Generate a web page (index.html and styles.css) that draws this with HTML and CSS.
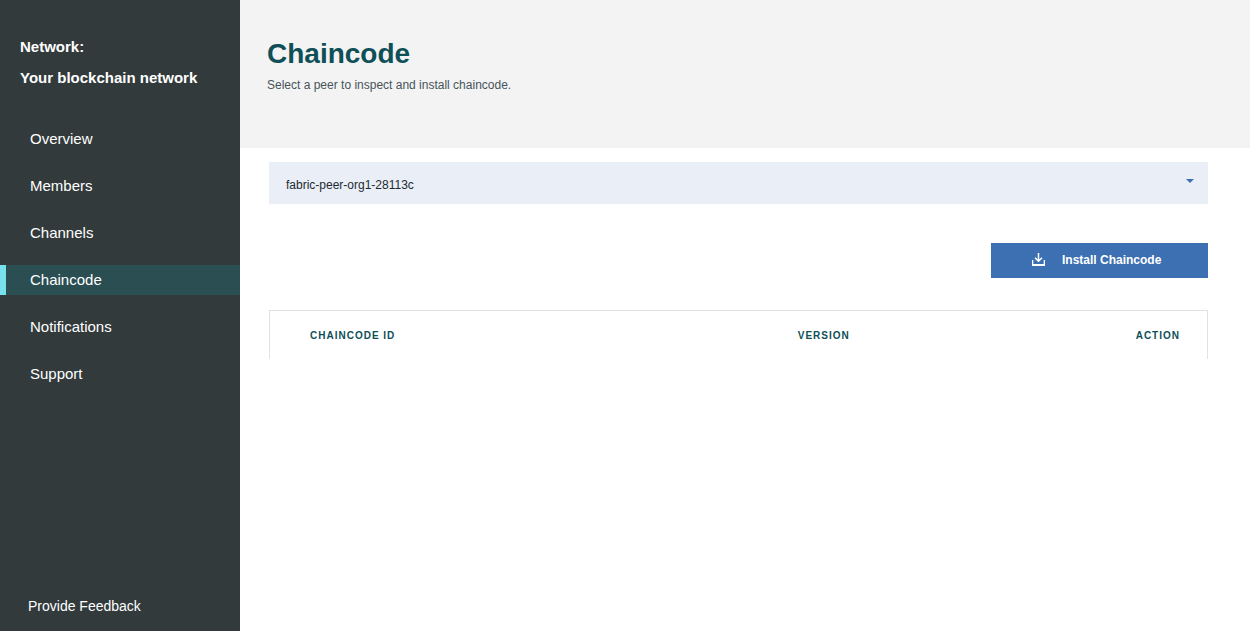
FILE: index.html
```html
<!DOCTYPE html>
<html lang="en">
<head>
<meta charset="utf-8">
<meta name="viewport" content="width=device-width, initial-scale=1">
<title>Chaincode</title>
<link rel="stylesheet" href="styles.css">
</head>
<body>
<div class="app">
  <aside class="sidebar">
    <div class="network">
      <p class="network-line">Network:</p>
      <p class="network-line">Your blockchain network</p>
    </div>
    <nav class="nav">
      <a class="nav-item" href="#overview">Overview</a>
      <a class="nav-item" href="#members">Members</a>
      <a class="nav-item" href="#channels">Channels</a>
      <a class="nav-item nav-item-active" href="#chaincode" aria-current="page">Chaincode</a>
      <a class="nav-item" href="#notifications">Notifications</a>
      <a class="nav-item" href="#support">Support</a>
    </nav>
    <a class="feedback" href="#feedback">Provide Feedback</a>
  </aside>
  <main class="main">
    <header class="page-header">
      <h1 class="title">Chaincode</h1>
      <p class="subtitle">Select a peer to inspect and install chaincode.</p>
    </header>
    <div class="content">
      <div class="peer">
        <select class="peer-select" aria-label="Peer">
          <option>fabric-peer-org1-28113c</option>
        </select>
        <svg class="peer-arrow" width="8" height="4" viewBox="0 0 8 4" aria-hidden="true"><path d="M0 0h8L4 4z"/></svg>
      </div>
      <button class="install" type="button">
        <svg class="install-icon" width="13" height="13" viewBox="0 0 13 13" aria-hidden="true">
          <path d="M6.500 0v8M3 4.800l3.500 3.500L10 4.800" fill="none" stroke="currentColor" stroke-width="1.500"/>
          <path d="M0 7h1.300v4h10.400V7H13v6H0z" fill="currentColor"/>
        </svg>
        <span>Install Chaincode</span>
      </button>
      <table class="chaincodes">
        <thead>
          <tr>
            <th class="col-id" scope="col">CHAINCODE ID</th>
            <th class="col-version" scope="col">VERSION</th>
            <th class="col-action" scope="col">ACTION</th>
          </tr>
        </thead>
      </table>
    </div>
  </main>
</div>
</body>
</html>
```

FILE: styles.css
```css
* {
  box-sizing: border-box;
}

body {
  margin: 0;
  background: #fff;
  color: #1d2b30;
  font-family: "Liberation Sans", Arial, sans-serif;
}

.app {
  display: flex;
  min-height: 100vh;
}

.sidebar {
  display: flex;
  flex: 0 0 240px;
  flex-direction: column;
  padding: 31px 0 15px;
  background: #323a3c;
  color: #fff;
}

.network {
  padding: 0 20px;
}

.network-line {
  margin: 0;
  font-size: 15px;
  font-weight: bold;
  line-height: 31px;
}

.nav {
  display: flex;
  flex-direction: column;
  gap: 17px;
  padding-top: 31px;
}

.nav-item {
  padding-left: 24px;
  border-left: 6px solid transparent;
  color: #fff;
  font-size: 15px;
  line-height: 30px;
  text-decoration: none;
}

.nav-item-active {
  border-left-color: #78e2ec;
  background: #2a4e51;
}

.feedback {
  margin-top: auto;
  padding-left: 28px;
  color: #fff;
  font-size: 14px;
  line-height: 20px;
  text-decoration: none;
}

.main {
  flex: 1;
  min-width: 0;
}

.page-header {
  padding: 36px 27px 53px;
  background: #f3f3f3;
}

.title {
  margin: 0;
  color: #0f4f57;
  font-size: 28px;
  line-height: 36px;
}

.subtitle {
  margin: 0;
  padding-top: 3px;
  color: #47535a;
  font-size: 12px;
  line-height: 20px;
}

.content {
  display: flex;
  flex-direction: column;
  padding: 14px 42px 32px 29px;
}

.peer {
  position: relative;
}

.peer-select {
  display: block;
  width: 100%;
  height: 42px;
  padding: 3px 40px 0 17px;
  border: 0;
  border-radius: 0;
  appearance: none;
  background: #eaeef7;
  color: #1d2b30;
  font: 12px "Liberation Sans", Arial, sans-serif;
}

.peer-arrow {
  position: absolute;
  top: 17px;
  right: 14px;
  fill: #3d70b2;
  pointer-events: none;
}

.install {
  display: flex;
  align-items: center;
  align-self: flex-end;
  gap: 17px;
  min-width: 217px;
  height: 35px;
  margin-top: 39px;
  padding: 0 41px 2px;
  border: 0;
  background: #3d70b2;
  color: #fff;
  font: bold 12px "Liberation Sans", Arial, sans-serif;
}

.chaincodes {
  width: 100%;
  margin-top: 32px;
  border: 1px solid #dfe3e6;
  border-bottom: 0;
  border-spacing: 0;
  table-layout: fixed;
}

.chaincodes th {
  height: 48px;
  padding: 0;
  color: #0f4f57;
  font-size: 10px;
  letter-spacing: 1px;
  text-align: left;
}

.chaincodes .col-id {
  width: 56%;
  padding-left: 40px;
}

.chaincodes .col-version {
  padding-left: 3px;
}

.chaincodes .col-action {
  padding-right: 27px;
  text-align: right;
}
```
